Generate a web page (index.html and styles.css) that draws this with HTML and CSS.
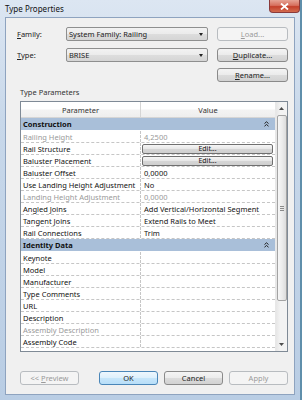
FILE: index.html
```html
<!DOCTYPE html>
<html lang="en">
<head>
    <meta charset="UTF-8">
    <meta name="viewport" content="width=device-width, initial-scale=1.0">
    <title>Type Properties</title>
    <link rel="stylesheet" href="styles.css">
</head>
<body>
    <div class="window">
        <div class="titlebar">
            <span class="title">Type Properties</span>
            <span class="close-btn">
                <svg width="9" height="7" viewBox="0 0 9 7"><path d="M1 0.5 L8 6.5 M8 0.5 L1 6.5" stroke="#fff" stroke-width="1.8"/></svg>
            </span>
        </div>

        <div class="client">
            <div class="type-form">
                <label class="field-label"><u>F</u>amily:</label>
                <div class="combo"><span>System Family: Railing</span><span class="arrow"></span></div>
                <button class="btn disabled"><u>L</u>oad...</button>

                <label class="field-label"><u>T</u>ype:</label>
                <div class="combo"><span>BRISE</span><span class="arrow"></span></div>
                <button class="btn"><u>D</u>uplicate...</button>

                <button class="btn rename"><u>R</u>ename...</button>
            </div>

            <div class="section-label">Type Parameters</div>

            <div class="grid-box">
                <div class="grid">
                    <div class="grid-head">
                        <div class="head-cell">Parameter</div>
                        <div class="head-cell">Value</div>
                    </div>

                    <div class="group">
                        <span>Construction</span>
                        <svg class="collapse" width="5" height="6" viewBox="0 0 5 6"><path d="M0.5 2.5 L2.5 0.8 L4.5 2.5 M0.5 5.2 L2.5 3.5 L4.5 5.2" fill="none" stroke="#222" stroke-width="1"/></svg>
                    </div>
                    <div class="row dim"><div class="cell name">Railing Height</div><div class="cell">4,2500</div></div>
                    <div class="row"><div class="cell name">Rail Structure</div><div class="cell"><div class="edit-btn">Edit...</div></div></div>
                    <div class="row"><div class="cell name">Baluster Placement</div><div class="cell"><div class="edit-btn">Edit...</div></div></div>
                    <div class="row"><div class="cell name">Baluster Offset</div><div class="cell">0,0000</div></div>
                    <div class="row"><div class="cell name">Use Landing Height Adjustment</div><div class="cell">No</div></div>
                    <div class="row dim"><div class="cell name">Landing Height Adjustment</div><div class="cell">0,0000</div></div>
                    <div class="row"><div class="cell name">Angled Joins</div><div class="cell">Add Vertical/Horizontal Segment</div></div>
                    <div class="row"><div class="cell name">Tangent Joins</div><div class="cell">Extend Rails to Meet</div></div>
                    <div class="row"><div class="cell name">Rail Connections</div><div class="cell">Trim</div></div>

                    <div class="group">
                        <span>Identity Data</span>
                        <svg class="collapse" width="5" height="6" viewBox="0 0 5 6"><path d="M0.5 2.5 L2.5 0.8 L4.5 2.5 M0.5 5.2 L2.5 3.5 L4.5 5.2" fill="none" stroke="#222" stroke-width="1"/></svg>
                    </div>
                    <div class="row"><div class="cell name">Keynote</div><div class="cell"></div></div>
                    <div class="row"><div class="cell name">Model</div><div class="cell"></div></div>
                    <div class="row"><div class="cell name">Manufacturer</div><div class="cell"></div></div>
                    <div class="row"><div class="cell name">Type Comments</div><div class="cell"></div></div>
                    <div class="row"><div class="cell name">URL</div><div class="cell"></div></div>
                    <div class="row"><div class="cell name">Description</div><div class="cell"></div></div>
                    <div class="row dim"><div class="cell name">Assembly Description</div><div class="cell"></div></div>
                    <div class="row"><div class="cell name">Assembly Code</div><div class="cell"></div></div>
                </div>

                <div class="scrollbar">
                    <div class="scroll-arrow">
                        <svg width="5" height="3" viewBox="0 0 5 3"><path d="M0 3 L2.5 0 L5 3 Z" fill="#4d4d4d"/></svg>
                    </div>
                    <div class="scroll-thumb">
                        <div class="grip"></div>
                    </div>
                    <div class="scroll-arrow bottom">
                        <svg width="5" height="3" viewBox="0 0 5 3"><path d="M0 0 L5 0 L2.5 3 Z" fill="#4d4d4d"/></svg>
                    </div>
                </div>
            </div>

            <div class="footer">
                <button class="btn disabled preview">&lt;&lt; <u>P</u>review</button>
                <div class="footer-actions">
                    <button class="btn default">OK</button>
                    <button class="btn">Cancel</button>
                    <button class="btn disabled">Apply</button>
                </div>
            </div>
        </div>
    </div>
</body>
</html>
```

FILE: styles.css
```css
body {
    margin: 0;
    width: 302px;
    height: 400px;
    overflow: hidden;
    font-family: "Noto Sans", "DejaVu Sans", sans-serif;
    font-size: 7.5px;
    color: #000;
}

.window {
    width: 302px;
    height: 400px;
    box-sizing: border-box;
    padding: 0 5px 5px 5px;
    border-right: 2px solid #5f8fab;
    background: linear-gradient(180deg, #dce6f2 0%, #c8d8ea 30%, #b9cde4 100%);
    display: flex;
    flex-direction: column;
}

.titlebar {
    height: 17px;
    display: flex;
    align-items: flex-start;
}

.title {
    margin-top: 3px;
    font-size: 8px;
    color: #111;
}

.close-btn {
    margin-left: auto;
    margin-right: -5px;
    width: 31px;
    height: 13px;
    box-sizing: border-box;
    border: 1px solid #8a3a3a;
    border-top: none;
    border-radius: 0 0 4px 4px;
    background: linear-gradient(180deg, #e6a395 0%, #d7705e 45%, #c4402b 55%, #d26b4f 100%);
    display: flex;
    align-items: center;
    justify-content: center;
}

.client {
    flex: 1;
    background: #f0f0f0;
    border: 1px solid #8ea3bf;
    padding: 9px 6px 9px 14px;
    display: flex;
    flex-direction: column;
}

/* top form */
.type-form {
    display: grid;
    grid-template-columns: 37px 142px 71px;
    grid-template-rows: 15px 14px 14px;
    column-gap: 9px;
    row-gap: 6px;
}

.field-label {
    margin-left: -3px;
    line-height: 14px;
    color: #222;
}

.combo {
    height: 14px;
    box-sizing: border-box;
    border: 1px solid #8e8f8f;
    border-radius: 2px;
    background: linear-gradient(180deg, #f2f2f2 0%, #ebebeb 50%, #dddddd 51%, #d5d5d5 100%);
    display: flex;
    align-items: center;
    padding: 0 4px 0 2px;
    color: #222;
}

.combo .arrow {
    margin-left: auto;
    width: 0;
    height: 0;
    border-left: 2.5px solid transparent;
    border-right: 2.5px solid transparent;
    border-top: 3px solid #222;
}

.btn {
    height: 14px;
    box-sizing: border-box;
    margin: 0;
    padding: 0;
    font-family: inherit;
    font-size: 7.5px;
    color: #222;
    border: 1px solid #8a8a8a;
    border-radius: 3px;
    background: linear-gradient(180deg, #f4f4f4 0%, #ebebeb 50%, #dcdcdc 51%, #d2d2d2 100%);
}

.btn.disabled {
    color: #9a9a9a;
    border-color: #b8bcc0;
    background: #f4f4f4;
}

.btn.default {
    border-color: #4a86b8;
    background: linear-gradient(180deg, #eef7fd 0%, #ddf0fc 50%, #c7e6fa 51%, #b8def8 100%);
}

.btn.rename {
    grid-column: 3;
}

.section-label {
    margin: 5px 0 4px;
    height: 10px;
    line-height: 10px;
    color: #333;
}

/* property grid */
.grid-box {
    height: 251px;
    box-sizing: border-box;
    border: 1px solid #7f8a96;
    background: #fff;
    display: flex;
    overflow: hidden;
}

.grid {
    flex: 1;
    display: flex;
    flex-direction: column;
}

.grid-head {
    display: grid;
    grid-template-columns: 120px 1fr;
    height: 16px;
    box-sizing: border-box;
    border-bottom: 1px solid #d5d5d5;
    background: linear-gradient(180deg, #ffffff 0%, #ffffff 45%, #f3f3f3 55%, #eeeeee 100%);
}

.head-cell {
    display: flex;
    align-items: center;
    justify-content: center;
    color: #333;
}

.head-cell:first-child {
    border-right: 1px solid #d5d5d5;
}

.group {
    height: 13px;
    box-sizing: border-box;
    background: #a9bfd9;
    border-bottom: 1px solid #fff;
    display: flex;
    align-items: center;
    padding: 0 6px 0 2px;
    font-weight: bold;
    color: #111;
}

.group .collapse {
    margin-left: auto;
}

.row {
    display: grid;
    grid-template-columns: 120px 1fr;
    height: 12px;
    box-sizing: border-box;
    border-bottom: 1px dashed #c6c6c6;
}

.cell {
    display: flex;
    align-items: center;
    padding-left: 3px;
    white-space: nowrap;
    overflow: hidden;
    color: #111;
}

.cell.name {
    padding-left: 2px;
    border-right: 1px dashed #c6c6c6;
}

.row.dim .cell {
    color: #9a9a9a;
}

.edit-btn {
    flex: 1;
    height: 10px;
    margin-right: 2px;
    margin-left: -2px;
    box-sizing: border-box;
    border: 1px solid #6f6f6f;
    border-radius: 2px;
    background: linear-gradient(180deg, #f6f6f6 0%, #e6e6e6 50%, #d6d6d6 51%, #cfcfcf 100%);
    display: flex;
    align-items: center;
    justify-content: center;
    font-size: 7px;
}

/* scrollbar */
.scrollbar {
    width: 11px;
    background: linear-gradient(90deg, #e6e6e6 0%, #f3f3f3 40%, #f3f3f3 100%);
    border-left: 1px solid #e8e8e8;
    display: flex;
    flex-direction: column;
    align-items: center;
}

.scroll-arrow {
    height: 13px;
    display: flex;
    align-items: center;
    justify-content: center;
}

.scroll-arrow.bottom {
    margin-top: auto;
}

.scroll-thumb {
    width: 10px;
    height: 186px;
    box-sizing: border-box;
    border: 1px solid #a3a3a3;
    border-radius: 2px;
    background: linear-gradient(90deg, #f7f7f7 0%, #ececec 50%, #dcdcdc 100%);
    display: flex;
    align-items: center;
    justify-content: center;
}

.grip {
    width: 4px;
    height: 5px;
    border-top: 1px solid #8a8a8a;
    border-bottom: 1px solid #8a8a8a;
    box-sizing: border-box;
    background: linear-gradient(180deg, transparent 40%, #8a8a8a 40%, #8a8a8a 60%, transparent 60%);
}

/* bottom buttons */
.footer {
    margin-top: auto;
    display: flex;
    justify-content: space-between;
}

.footer .btn {
    width: 59px;
}

.footer-actions {
    display: flex;
    gap: 6px;
}
```
